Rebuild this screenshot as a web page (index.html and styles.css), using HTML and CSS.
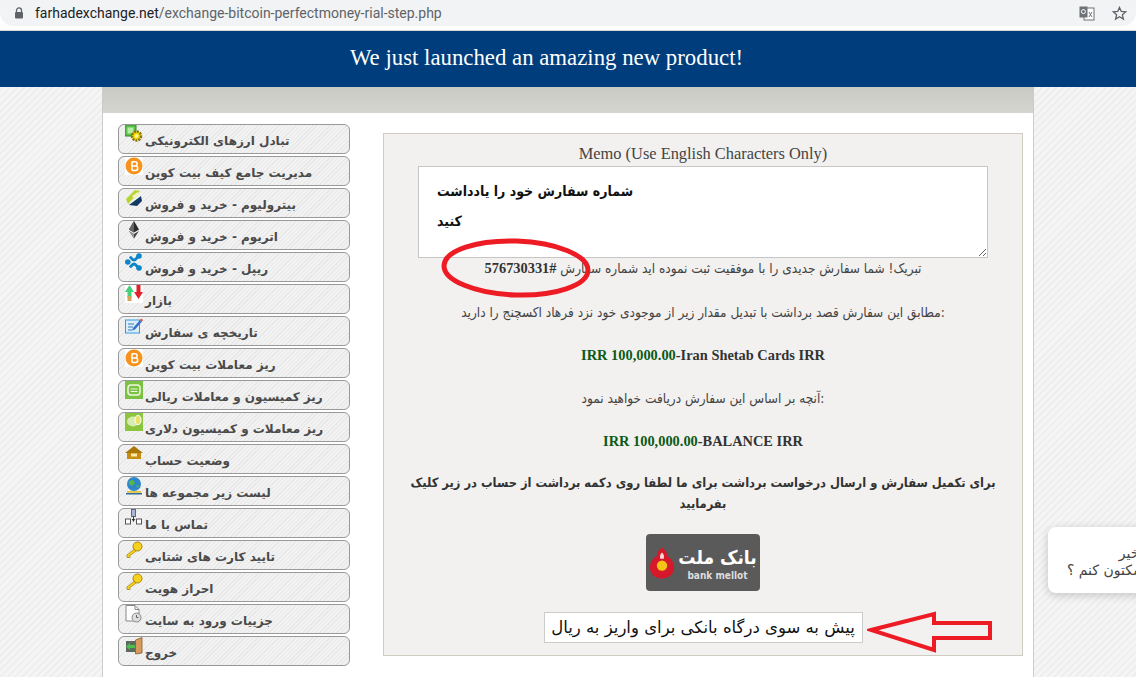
FILE: index.html
```html
<!DOCTYPE html>
<html lang="fa">
<head>
    <meta charset="UTF-8">
    <meta name="viewport" content="width=device-width, initial-scale=1.0">
    <title>Farhad Exchange</title>
    <link rel="stylesheet" href="styles.css">
</head>
<body>
    <div class="chrome">
        <div class="omnibox">
            <svg class="lock" width="10" height="12" viewBox="0 0 10 12"><path d="M2.500 5V3.400a2.500 2.500 0 0 1 5 0V5" fill="none" stroke="#5f6368" stroke-width="1.300"/><rect x="1" y="5" width="8" height="6.500" rx="1" fill="#5f6368"/></svg>
            <span class="url"><b>farhadexchange.net</b>/exchange-bitcoin-perfectmoney-rial-step.php</span>
            <svg class="translate" width="16" height="15" viewBox="0 0 16 15"><rect x="5" y="2" width="10" height="12" fill="#fff" stroke="#6f7377"/><rect x="0.500" y="0.500" width="8" height="11" fill="#6f7377"/><circle cx="4.400" cy="5.600" r="2" fill="none" stroke="#fff"/><path d="M10 6l3 5M13 6l-3 5" stroke="#6f7377"/></svg>
            <svg class="star" width="15" height="15" viewBox="0 0 15 15"><path d="M7.500 1.400l1.800 4.100 4.400.4-3.300 2.900 1 4.300-3.900-2.300-3.900 2.300 1-4.300L1.300 5.900l4.400-.4z" fill="none" stroke="#5f6368" stroke-width="1.300"/></svg>
        </div>
    </div>

    <div class="banner">We just launched an amazing new product!</div>

    <div class="wrap">
        <div class="strip"></div>
        <div class="content">
            <ul class="menu">
                <li><svg class="ico" viewBox="0 0 18 18"><rect x="0" y="0" width="11" height="11" fill="#5cc04a" stroke="#2f8a2a"/><rect x="2.500" y="2.500" width="6" height="6" fill="#b6eea5"/><circle cx="11.500" cy="11" r="4.500" fill="#f5d90a" stroke="#8a7300" stroke-width="2.500" stroke-dasharray="2 1"/><circle cx="11.500" cy="11" r="1.800" fill="#fff6a8"/></svg><span dir="rtl">تبادل ارزهای الکترونیکی</span></li>
                <li><svg class="ico" viewBox="0 0 18 18"><rect width="18" height="18" fill="#fff"/><circle cx="9" cy="9" r="8.500" fill="#f7931a"/><path d="M7 4.500v9M7 4.800h3a2 2 0 0 1 0 4.200H7m0 0h3.500a2.200 2.200 0 0 1 0 4.400H7" fill="none" stroke="#fff" stroke-width="1.500"/></svg><span dir="rtl">مدیریت جامع کیف بیت کوین</span></li>
                <li><svg class="ico" viewBox="0 0 18 18"><path d="M1 10L10 1l5 1-12 13z" fill="#b8d433"/><path d="M7 7l6-4 1 3-5 4z" fill="#f4f0c0"/><path d="M4 16l12-9 1 5-5 5z" fill="#123a63"/></svg><span dir="rtl">بیترولیوم - خرید و فروش</span></li>
                <li><svg class="ico" viewBox="0 0 18 18"><path d="M9 0l5 8.500-5 3-5-3z" fill="#2b2b2b"/><path d="M9 0v11.500l-5-3z" fill="#666"/><path d="M4 10l5 3 5-3-5 7.500z" fill="#444"/><path d="M4 10l5 3v4.500z" fill="#999"/></svg><span dir="rtl">اتریوم - خرید و فروش</span></li>
                <li><svg class="ico" viewBox="0 0 18 18"><path d="M13 3.500C11 6 10.500 7 9 7S7 6 5 3.500M13 14.500C11 12 10.500 11 9 11s-2 1-4 3.500" fill="none" stroke="#0a86c9" stroke-width="2.800"/><circle cx="14" cy="3" r="2.800" fill="#0a86c9"/><circle cx="2.800" cy="9" r="2.800" fill="#0a86c9"/><circle cx="14" cy="15" r="2.800" fill="#0a86c9"/></svg><span dir="rtl">ریپل - خرید و فروش</span></li>
                <li><svg class="ico" viewBox="0 0 18 18"><rect width="18" height="18" fill="#fff"/><path d="M4.500 0L9 7H6.500v6h-4V7H0z" fill="#45d07a"/><path d="M2.500 11h4v5h-4z" fill="#d7a35a"/><path d="M13.500 14L18 7h-2.500V0h-4v7H9z" fill="#e3232b"/></svg><span dir="rtl">بازار</span></li>
                <li><svg class="ico" viewBox="0 0 18 18"><rect x="0.500" y="3" width="14" height="13" fill="#d9eefb" stroke="#3a9ad9"/><path d="M3 7h6M3 10h5M3 13h4" stroke="#3a7fb5"/><path d="M8 11L15 3l2 1.500-7 8-3 1z" fill="#3670c9"/><path d="M15 3l1-1.500 2 1.500-1 1.500z" fill="#e4432b"/></svg><span dir="rtl">تاریخچه ی سفارش</span></li>
                <li><svg class="ico" viewBox="0 0 18 18"><rect width="18" height="18" fill="#fff"/><circle cx="9" cy="9" r="8.500" fill="#f7931a"/><path d="M7 4.500v9M7 4.800h3a2 2 0 0 1 0 4.200H7m0 0h3.500a2.200 2.200 0 0 1 0 4.400H7" fill="none" stroke="#fff" stroke-width="1.500"/></svg><span dir="rtl">ریز معاملات بیت کوین</span></li>
                <li><svg class="ico" viewBox="0 0 18 18"><rect width="18" height="18" fill="#7cc242"/><rect x="3" y="4" width="12" height="10" rx="3" fill="none" stroke="#eef8de" stroke-width="1.500"/><path d="M5.500 8h7M5.500 10.500h7" stroke="#eef8de"/></svg><span dir="rtl">ریز کمیسیون و معاملات ریالی</span></li>
                <li><svg class="ico" viewBox="0 0 18 18"><rect width="18" height="18" fill="#8cc63f"/><ellipse cx="8" cy="8.500" rx="6" ry="5" fill="#d6ecb0"/><ellipse cx="13" cy="7" rx="3" ry="4.500" fill="#e9e36a" stroke="#fff"/></svg><span dir="rtl">ریز معاملات و کمیسیون دلاری</span></li>
                <li><svg class="ico" viewBox="0 0 18 18"><path d="M9 1L0 8h18z" fill="#a9770a"/><rect x="2" y="8" width="14" height="6" fill="#c68e10"/><rect x="6" y="8.500" width="6" height="3" fill="#fbe9b0"/></svg><span dir="rtl">وضعیت حساب</span></li>
                <li><svg class="ico" viewBox="0 0 18 18"><circle cx="9" cy="7" r="7" fill="#2c88c9"/><path d="M4 4l4-1 2 3-3 3-3-2zM11 9l3-1-1 3z" fill="#5bb547"/><rect x="2" y="14" width="14" height="1.800" fill="#e9c23c"/><rect x="1" y="16" width="16" height="1.500" fill="#2d6ea1"/></svg><span dir="rtl">لیست زیر مجموعه ها</span></li>
                <li><svg class="ico" viewBox="0 0 18 18"><rect x="6.500" y="0.500" width="4" height="7" fill="#a9b6d9" stroke="#667"/><path d="M8.500 7.500v5" stroke="#333"/><path d="M6.500 10h4l-2 2.500z" fill="#333"/><rect x="0.500" y="10" width="5" height="5" fill="#fff" stroke="#555"/><rect x="11.500" y="10" width="5" height="5" fill="#fff" stroke="#555"/></svg><span dir="rtl">تماس با ما</span></li>
                <li><svg class="ico" viewBox="0 0 18 18"><circle cx="12.500" cy="5.500" r="4.500" fill="#f6d21c" stroke="#a9860a"/><path d="M9.500 8L2 14v2.500h3v-2l5.500-4z" fill="#f6d21c" stroke="#a9860a" stroke-width=".8"/></svg><span dir="rtl">تایید کارت های شتابی</span></li>
                <li><svg class="ico" viewBox="0 0 18 18"><circle cx="12.500" cy="5.500" r="4.500" fill="#f6d21c" stroke="#a9860a"/><path d="M9.500 8L2 14v2.500h3v-2l5.500-4z" fill="#f6d21c" stroke="#a9860a" stroke-width=".8"/></svg><span dir="rtl">احراز هویت</span></li>
                <li><svg class="ico" viewBox="0 0 18 18"><path d="M1 .5h9l4 4V16H1z" fill="#fff" stroke="#888"/><path d="M10 .5v4h4" fill="none" stroke="#888"/><circle cx="11.500" cy="12.500" r="4.500" fill="#ddd" stroke="#888"/><path d="M11.500 10v2.500h2" fill="none" stroke="#666"/></svg><span dir="rtl">جزییات ورود به سایت</span></li>
                <li><svg class="ico" viewBox="0 0 18 18"><path d="M10.500 3L17 .5V16l-6.500 1z" fill="#d59a5c" stroke="#8a5a2a" stroke-width=".8"/><rect x="1" y="4" width="9.500" height="11" fill="#5b6b5b"/><path d="M1 9.500L5 6v2h5v3H5v2z" fill="#4cc04c"/></svg><span dir="rtl">خروج</span></li>
            </ul>

            <div class="panel">
                <div class="memo-label">Memo (Use English Characters Only)</div>
                <textarea class="memo" readonly>شماره سفارش خود را یادداشت
کنید</textarea>
                <p class="line first" dir="rtl">تبریک! شما سفارش جدیدی را با موفقیت ثبت نموده اید شماره سفارش <b class="order">#576730331</b></p>
                <p class="line" dir="rtl">:مطابق این سفارش قصد برداشت با تبدیل مقدار زیر از موجودی خود نزد فرهاد اکسچنج را دارید</p>
                <p class="amount"><span>IRR 100,000.00</span>-Iran Shetab Cards IRR</p>
                <p class="line" dir="rtl">:آنچه بر اساس این سفارش دریافت خواهید نمود</p>
                <p class="amount"><span>IRR 100,000.00</span>-BALANCE IRR</p>
                <p class="notice" dir="rtl">برای تکمیل سفارش و ارسال درخواست برداشت برای ما لطفا روی دکمه برداشت از حساب در زیر کلیک بفرمایید</p>
                <div class="bank">
                    <svg width="26" height="36" viewBox="0 0 30 40"><path d="M15 2c4 3 6 6 6 10 5 3 8 8 8 13 0 8-6 13-14 13S1 33 1 25c0-5 3-10 8-13 0-4 2-7 6-10z" fill="#d5182a"/><circle cx="15" cy="23" r="6" fill="#f3c316"/><path d="M15 8c2 2 3 4 2 7h-4c-1-3 0-5 2-7z" fill="#fbd6d6"/></svg>
                    <div class="bank-text"><span class="bank-fa" dir="rtl">بانک ملت</span><span class="bank-en">bank mellot</span></div>
                </div>
                <button class="go" dir="rtl">پیش به سوی درگاه بانکی برای واریز به ریال</button>
            </div>
        </div>
    </div>

    <svg class="mark-ellipse" width="160" height="70" viewBox="0 0 160 70"><ellipse cx="80" cy="33" rx="72" ry="27" fill="none" stroke="#ed1c24" stroke-width="5" transform="rotate(2 80 33)"/></svg>
    <svg class="mark-arrow" width="130" height="42" viewBox="0 0 130 42"><path d="M4 19L67 3v9h56v15H67v12z" fill="none" stroke="#ed1c24" stroke-width="4"/></svg>

    <div class="chat" dir="rtl">وقت بخیر<br>چطور میتونم کمکتون کنم ؟</div>
</body>
</html>
```

FILE: styles.css
```css
html, body { height: 100%; overflow: hidden; }
body { margin: 0; font-family: "DejaVu Sans", sans-serif; color: #333; background: repeating-linear-gradient(135deg, #f5f5f5 0, #f5f5f5 3px, #eeeeee 3px, #eeeeee 5px); }

.chrome { height: 30px; background: #fff; border-bottom: 1px solid #d6d6d6; }
.omnibox { height: 26px; background: #f1f3f4; border-radius: 0 0 14px 14px; display: flex; align-items: center; padding: 0 9px 0 14px; }
.lock { margin-right: 11px; }
.url { font: 14px Roboto, sans-serif; color: #5f6368; flex: 1; }
.url b { font-weight: 400; color: #202124; }
.translate { margin-right: 17px; }

.banner { height: 56px; padding-right: 43px; background: #003d7c; color: #fff; text-align: center; font: 22.800px/54px "Liberation Serif", serif; }

.wrap { width: 932px; height: 590px; margin-left: 102px; background: #fff; border-left: 1px solid #ccc; border-right: 1px solid #ccc; box-sizing: border-box; }
.strip { height: 26px; background: linear-gradient(#c9cac4, #d4d5cf); }
.content { display: flex; align-items: flex-start; padding: 11px 9px 0 15px; }

.menu { list-style: none; margin: 0; padding: 0; width: 232px; display: flex; flex-direction: column; gap: 2px; }
.menu li { height: 30px; box-sizing: border-box; border: 1px solid #999; border-radius: 6px; background: repeating-linear-gradient(135deg, #f2f2f2 0, #f2f2f2 2px, #e8e8e8 2px, #e8e8e8 3px); display: flex; align-items: flex-start; padding-left: 6px; font-size: 12px; font-weight: bold; color: #4a4a4a; line-height: 30px; }
.menu span { margin-left: 2px; margin-top: 1px; }
.ico { width: 18px; height: 18px; flex: none; }

.panel { width: 640px; height: 523px; margin: 9px 0 0 33px; box-sizing: border-box; border: 1px solid #cfccc4; background: #f2f1f0; display: flex; flex-direction: column; align-items: center; }
.memo-label { font: 16.400px/18px "Liberation Serif", serif; margin-top: 11px; color: #444; }
.memo { width: 570px; height: 92px; margin-top: 3px; box-sizing: border-box; border: 1px solid #c6c6c6; background: #fff; padding: 9px 18px; font: bold 14px/30px "DejaVu Sans Condensed", "DejaVu Sans", sans-serif; color: #111; flex: none; }
.line { margin: 0; font: 13.500px/18px "DejaVu Sans Condensed", "DejaVu Sans", sans-serif; color: #444; text-align: center; height: 43px; white-space: nowrap; }
.line.first { height: 44px; margin-top: 1px; }
.order { font: bold 14.400px "Liberation Serif", serif; color: #333; }
.amount { margin: 0; height: 43px; font: bold 14.400px/18px "Liberation Serif", serif; color: #333; }
.amount span { color: #0b5a16; }
.notice { margin: -3px 0 0; width: 600px; text-align: center; font: bold 12.800px/21px "DejaVu Sans Condensed", "DejaVu Sans", sans-serif; color: #333; }

.bank { width: 114px; height: 57px; margin-top: 20px; background: #5a5a5a; border-radius: 4px; display: flex; align-items: center; justify-content: center; gap: 3px; color: #fff; }
.bank-text { display: flex; flex-direction: column; align-items: center; white-space: nowrap; }
.bank-fa { font: bold 19px/26px "DejaVu Sans Condensed", "DejaVu Sans", sans-serif; }
.bank-en { font: bold 10px/12px "DejaVu Sans Condensed", "DejaVu Sans", sans-serif; color: #ddd; }

.go { width: 319px; height: 31px; margin-top: 21px; border: 1px solid #ccc; background: #fff; font: 16.500px "DejaVu Sans", sans-serif; color: #111; padding: 0; white-space: nowrap; }

.mark-ellipse { position: absolute; left: 436px; top: 235px; }
.mark-arrow { position: absolute; left: 867px; top: 611px; }

.chat { position: absolute; left: 1048px; top: 527px; width: 198px; height: 66px; box-sizing: border-box; padding: 18px 0 0; background: #fff; border-radius: 8px; box-shadow: 0 2px 10px rgba(0,0,0,.2); text-align: center; font: 14px/17px "DejaVu Sans", sans-serif; color: #444; }
```
